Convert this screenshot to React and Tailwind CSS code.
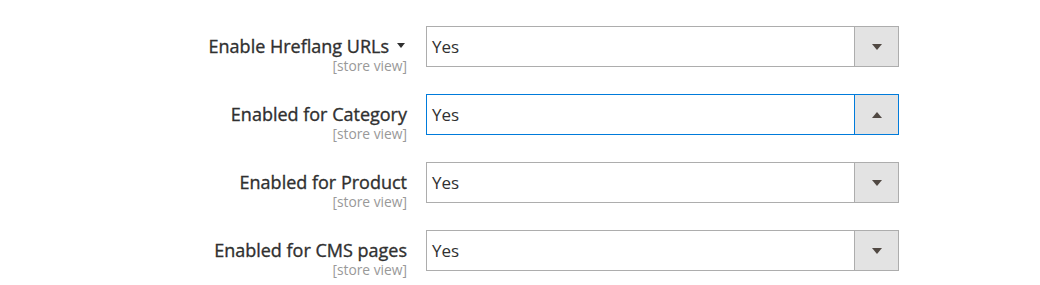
const fields = [
  { label: "Enable Hreflang URLs", caret: true },
  { label: "Enabled for Category", focused: true },
  { label: "Enabled for Product" },
  { label: "Enabled for CMS pages" },
];

function Select({ focused }) {
  return (
    <div
      className={`flex h-[41px] w-[473px] border bg-white ${
        focused ? "border-[#007bdb]" : "border-[#adadad]"
      }`}
    >
      <div className="flex flex-1 items-center pl-[5px] text-[17px] text-[#303030]">Yes</div>
      <div
        className={`flex w-[44px] items-center justify-center border-l bg-[#e3e3e3] ${
          focused ? "border-[#007bdb]" : "border-[#adadad]"
        }`}
      >
        {focused ? (
          <span className="h-0 w-0 border-x-[5px] border-b-[6px] border-x-transparent border-b-[#514943]" />
        ) : (
          <span className="h-0 w-0 border-x-[5px] border-t-[6px] border-x-transparent border-t-[#514943]" />
        )}
      </div>
    </div>
  );
}

export default function App() {
  return (
    <div className="h-[285px] w-[1040px] bg-white pt-[26px] font-['Open_Sans',sans-serif]">
      <div className="flex flex-col gap-[27px]">
        {fields.map((f) => (
          <div key={f.label} className="flex h-[41px] items-start">
            <div className="w-[407px] pt-[10px] text-right">
              <div className="flex items-center justify-end text-[18px] leading-[20px] text-[#303030] [-webkit-text-stroke:0.35px_#303030]">
                {f.label}
                {f.caret && (
                  <span className="ml-[8px] mr-[2px] mb-[2px] h-0 w-0 border-x-[4px] border-t-[5px] border-x-transparent border-t-[#303030]" />
                )}
              </div>
              <div className="mt-[2px] text-[13.8px] leading-[15px] text-[#999]">[store view]</div>
            </div>
            <div className="ml-[19px]">
              <Select focused={f.focused} />
            </div>
          </div>
        ))}
      </div>
    </div>
  );
}
